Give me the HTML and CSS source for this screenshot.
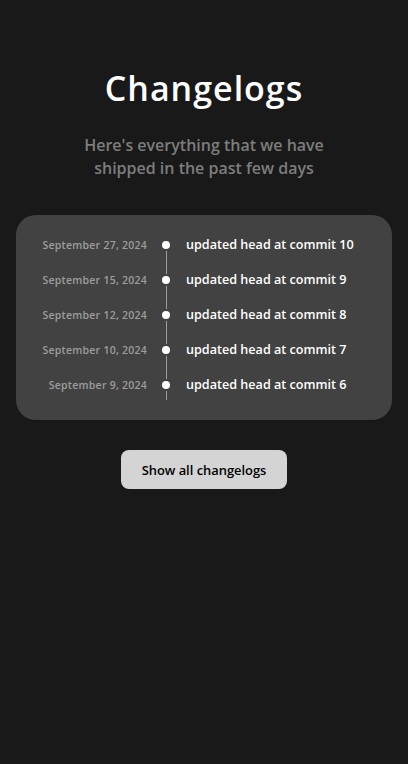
FILE: index.html
```html
<!DOCTYPE html>
<html lang="en">
<head>
<meta charset="utf-8">
<title>Changelogs</title>
<link rel="stylesheet" href="styles.css">
</head>
<body>
<main class="page">
  <h1 class="title">Changelogs</h1>
  <p class="subtitle">Here's everything that we have<br>shipped in the past few days</p>
  <section class="card">
    <ul class="timeline">
      <li class="row"><span class="date">September 27, 2024</span><span class="dot"></span><span class="msg">updated head at commit 10</span></li>
      <li class="row"><span class="date">September 15, 2024</span><span class="dot"></span><span class="msg">updated head at commit 9</span></li>
      <li class="row"><span class="date">September 12, 2024</span><span class="dot"></span><span class="msg">updated head at commit 8</span></li>
      <li class="row"><span class="date">September 10, 2024</span><span class="dot"></span><span class="msg">updated head at commit 7</span></li>
      <li class="row"><span class="date">September 9, 2024</span><span class="dot"></span><span class="msg">updated head at commit 6</span></li>
    </ul>
  </section>
  <div class="actions">
    <button class="btn" type="button">Show all changelogs</button>
  </div>
</main>
</body>
</html>
```
FILE: styles.css
```css
* { box-sizing: border-box; }
html, body {
  margin: 0;
  padding: 0;
  background: #191919;
}
body {
  font-family: "Open Sans", "Noto Sans", sans-serif;
  color: #ffffff;
  min-height: 764px;
}
.page {
  padding: 67px 16px 40px 16px;
  display: flex;
  flex-direction: column;
  align-items: stretch;
}
.title {
  margin: 0;
  text-align: center;
  font-size: 34px;
  line-height: 42px;
  letter-spacing: 1px;
  font-weight: 600;
  color: #ffffff;
}
.subtitle {
  margin: 25px 0 0 0;
  text-align: center;
  font-size: 16px;
  line-height: 23px;
  font-weight: 600;
  color: #7d7d7d;
}
.card {
  margin-top: 35px;
  background: #424242;
  border-radius: 20px;
  padding: 12px 0 18px 0;
}
.timeline {
  list-style: none;
  margin: 0;
  padding: 0;
}
.row {
  position: relative;
  display: grid;
  grid-template-columns: 131px 38px 1fr;
  align-items: center;
  height: 35px;
}
.row::before {
  content: "";
  position: absolute;
  left: 150px;
  top: 50%;
  width: 1px;
  height: 35px;
  background: #9e9e9e;
}
.row:last-child::before {
  height: 15px;
}
.date {
  text-align: right;
  font-size: 10.5px;
  letter-spacing: 0.25px;
  font-weight: 600;
  color: #9d9d9d;
  white-space: nowrap;
}
.dot {
  position: relative;
  z-index: 1;
  justify-self: center;
  width: 8px;
  height: 8px;
  border-radius: 50%;
  background: #ffffff;
  box-shadow: 0 0 0 2px #424242;
}
.msg {
  padding-left: 1px;
  font-size: 12.6px;
  font-weight: 600;
  color: #ffffff;
  white-space: nowrap;
}
.actions {
  display: flex;
  justify-content: center;
  margin-top: 30px;
}
.btn {
  font-family: inherit;
  font-size: 12.9px;
  font-weight: 600;
  color: #000000;
  background: #d4d4d4;
  border: none;
  border-radius: 8px;
  height: 39px;
  padding: 0 21px;
}
```
